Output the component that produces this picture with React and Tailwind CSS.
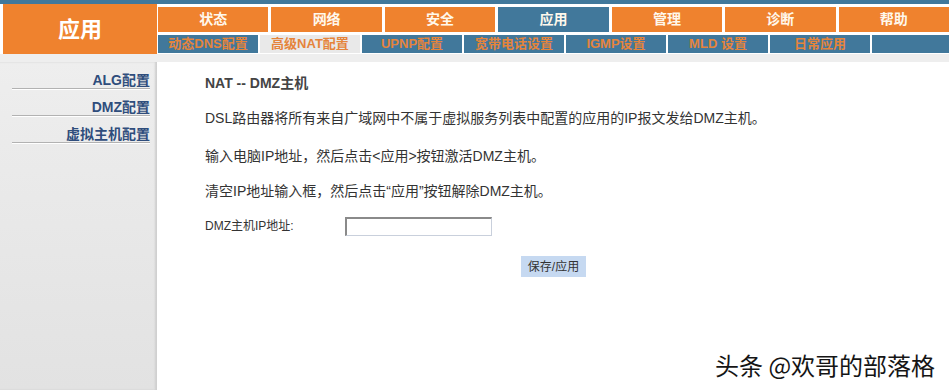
import React from "react";

const mainNav = ["状态", "网络", "安全", "应用", "管理", "诊断", "帮助"];
const subNav = ["动态DNS配置", "高级NAT配置", "UPNP配置", "宽带电话设置", "IGMP设置", "MLD 设置", "日常应用"];
const side = ["ALG配置", "DMZ配置", "虚拟主机配置"];

export default function App() {
  return (
    <div
      className="relative w-[949px] h-[390px] overflow-hidden bg-white flex flex-col"
      style={{ fontFamily: '"Liberation Sans", "Noto Sans CJK SC", sans-serif' }}
    >
      <div className="h-[4px] bg-[#41789b] shrink-0" />
      <div className="flex h-[50px] shrink-0">
        <div className="ml-[3px] w-[154px] h-[50px] bg-[#ef822e] flex items-center justify-center text-white text-[22px] font-bold">
          应用
        </div>
        <div className="flex-1 ml-[1px] pt-[3px] flex flex-col">
          <div className="flex gap-[3px] h-[25px]">
            {mainNav.map((t) => (
              <div
                key={t}
                className={`flex-1 flex items-center justify-center text-[14px] font-bold text-[#fff8ec] ${
                  t === "应用" ? "bg-[#41789b]" : "bg-[#ef822e]"
                }`}
              >
                {t}
              </div>
            ))}
          </div>
          <div className="flex gap-[2px] h-[18px] mt-[3px]">
            {subNav.map((t) => (
              <div
                key={t}
                className={`w-[100px] shrink-0 flex items-center justify-center text-[13px] font-bold text-[#e5843b] ${
                  t === "高级NAT配置" ? "bg-[#e9e9e9]" : "bg-[#41789b]"
                }`}
              >
                {t}
              </div>
            ))}
            <div className="flex-1 bg-[#41789b]" />
          </div>
        </div>
      </div>
      <div className="h-[8px] bg-[#eeeeee] shrink-0" />
      <div className="flex flex-1">
        <div className="w-[157px] shrink-0 bg-gradient-to-b from-[#eeeeee] to-[#e2e2e2] shadow-[inset_-2px_0_2px_#cfcfcf]">
          {side.map((t) => (
            <div
              key={t}
              className="ml-[12px] mr-[7px] pt-[10px] leading-[16px] h-[27px] text-right text-[14px] font-bold text-[#2f4d7c] border-b border-[#b2b2b2] shadow-[0_1px_0_#ffffff]"
            >
              {t}
            </div>
          ))}
        </div>
        <div className="flex-1 bg-white pl-[47px] text-[#333] ml-[1px]">
          <div className="mt-[11px] leading-[20px] text-[14px] font-bold text-[#444]">NAT -- DMZ主机</div>
          <div className="mt-[15px] leading-[20px] text-[14px]">
            DSL路由器将所有来自广域网中不属于虚拟服务列表中配置的应用的IP报文发给DMZ主机。
          </div>
          <div className="mt-[18px] leading-[20px] text-[14px]">输入电脑IP地址，然后点击&lt;应用&gt;按钮激活DMZ主机。</div>
          <div className="mt-[15px] leading-[20px] text-[14px]">清空IP地址输入框，然后点击“应用”按钮解除DMZ主机。</div>
          <div className="mt-[16px] flex items-center">
            <div className="w-[140px] text-[12px] leading-[19px]">DMZ主机IP地址:</div>
            <div className="w-[147px] h-[19px] border-t-2 border-l-2 border-t-[#8a8a8a] border-l-[#8a8a8a] border-b border-r border-b-[#c9d0dc] border-r-[#c9d0dc] bg-white" />
          </div>
          <div className="mt-[20px] flex justify-center pr-[47px]">
            <div className="w-[65px] h-[21px] bg-[#c6d9f1] text-[12px] text-[#333] flex items-center justify-center">
              保存/应用
            </div>
          </div>
        </div>
      </div>
      <div
        className="absolute left-[715px] top-[350px] text-[24px] leading-[30px] text-[#151515] whitespace-nowrap"
        style={{
          fontFamily: '"Noto Sans CJK SC", sans-serif',
          textShadow: "1px 1px 0 #fff, -1px -1px 0 #fff, 1px -1px 0 #fff, -1px 1px 0 #fff",
        }}
      >
        头条 @欢哥的部落格
      </div>
    </div>
  );
}
